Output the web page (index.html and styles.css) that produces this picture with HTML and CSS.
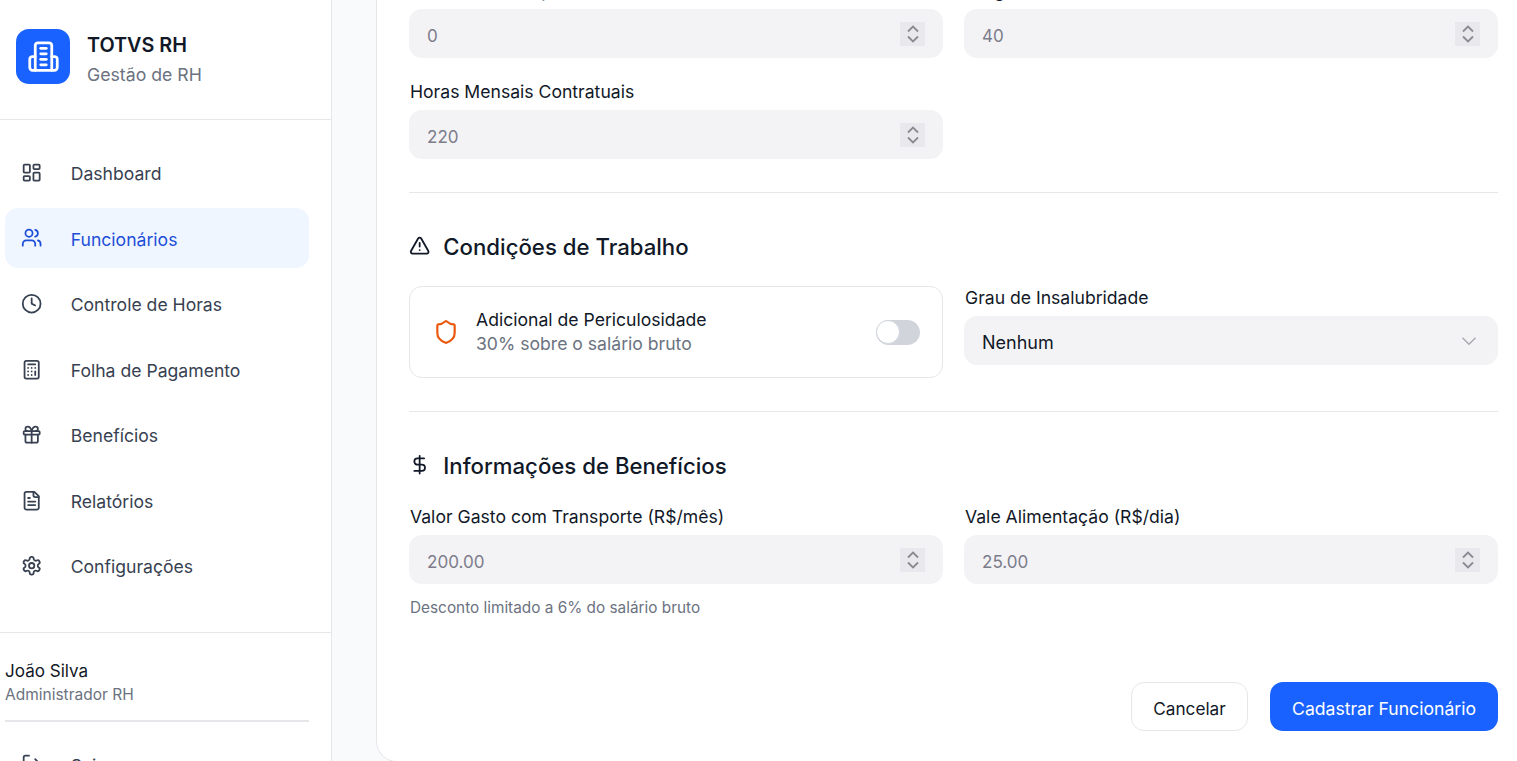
FILE: index.html
```html
<!DOCTYPE html>
<html lang="pt-BR">
<head>
<meta charset="utf-8">
<title>TOTVS RH</title>
<link rel="stylesheet" href="styles.css">
</head>
<body>
<div class="app">
  <aside class="sidebar">
    <header class="brand">
      <div class="logo">
        <svg viewBox="0 0 24 24" class="logo-ico"><path d="M6 22V4a2 2 0 0 1 2-2h8a2 2 0 0 1 2 2v18Z"/><path d="M6 12H4a2 2 0 0 0-2 2v6a2 2 0 0 0 2 2h2"/><path d="M18 12h2a2 2 0 0 1 2 2v6a2 2 0 0 1-2 2h-2"/><path d="M10 6h4"/><path d="M10 10h4"/><path d="M10 14h4"/><path d="M10 18h4"/></svg>
      </div>
      <div class="brand-text">
        <div class="brand-title">TOTVS RH</div>
        <div class="brand-sub">Gestão de RH</div>
      </div>
    </header>
    <nav class="nav">
      <a class="nav-item"><svg viewBox="0 0 24 24" class="ico"><rect width="7" height="9" x="3" y="3" rx="1"/><rect width="7" height="5" x="14" y="3" rx="1"/><rect width="7" height="9" x="14" y="12" rx="1"/><rect width="7" height="5" x="3" y="16" rx="1"/></svg><span>Dashboard</span></a>
      <a class="nav-item active"><svg viewBox="0 0 24 24" class="ico"><path d="M16 21v-2a4 4 0 0 0-4-4H6a4 4 0 0 0-4 4v2"/><circle cx="9" cy="7" r="4"/><path d="M22 21v-2a4 4 0 0 0-3-3.87"/><path d="M16 3.13a4 4 0 0 1 0 7.75"/></svg><span>Funcionários</span></a>
      <a class="nav-item"><svg viewBox="0 0 24 24" class="ico"><circle cx="12" cy="12" r="10"/><polyline points="12 6 12 12 16 14"/></svg><span>Controle de Horas</span></a>
      <a class="nav-item"><svg viewBox="0 0 24 24" class="ico"><rect width="16" height="20" x="4" y="2" rx="2"/><line x1="8" x2="16" y1="6" y2="6"/><line x1="16" x2="16" y1="14" y2="18"/><path d="M16 10h.01"/><path d="M12 10h.01"/><path d="M8 10h.01"/><path d="M12 14h.01"/><path d="M8 14h.01"/><path d="M12 18h.01"/><path d="M8 18h.01"/></svg><span>Folha de Pagamento</span></a>
      <a class="nav-item"><svg viewBox="0 0 24 24" class="ico"><rect x="3" y="8" width="18" height="4" rx="1"/><path d="M12 8v13"/><path d="M19 12v7a2 2 0 0 1-2 2H7a2 2 0 0 1-2-2v-7"/><path d="M7.5 8a2.5 2.5 0 0 1 0-5A4.8 8 0 0 1 12 8a4.8 8 0 0 1 4.5-5 2.5 2.5 0 0 1 0 5"/></svg><span>Benefícios</span></a>
      <a class="nav-item"><svg viewBox="0 0 24 24" class="ico"><path d="M15 2H6a2 2 0 0 0-2 2v16a2 2 0 0 0 2 2h12a2 2 0 0 0 2-2V7Z"/><path d="M14 2v4a2 2 0 0 0 2 2h4"/><path d="M10 9H8"/><path d="M16 13H8"/><path d="M16 17H8"/></svg><span>Relatórios</span></a>
      <a class="nav-item"><svg viewBox="0 0 24 24" class="ico"><path d="M12.22 2h-.44a2 2 0 0 0-2 2v.18a2 2 0 0 1-1 1.73l-.43.25a2 2 0 0 1-2 0l-.15-.08a2 2 0 0 0-2.73.73l-.22.38a2 2 0 0 0 .73 2.73l.15.1a2 2 0 0 1 1 1.72v.51a2 2 0 0 1-1 1.74l-.15.09a2 2 0 0 0-.73 2.73l.22.38a2 2 0 0 0 2.73.73l.15-.08a2 2 0 0 1 2 0l.43.25a2 2 0 0 1 1 1.73V20a2 2 0 0 0 2 2h.44a2 2 0 0 0 2-2v-.18a2 2 0 0 1 1-1.73l.43-.25a2 2 0 0 1 2 0l.15.08a2 2 0 0 0 2.73-.73l.22-.39a2 2 0 0 0-.73-2.73l-.15-.08a2 2 0 0 1-1-1.74v-.5a2 2 0 0 1 1-1.74l.15-.09a2 2 0 0 0 .73-2.73l-.22-.38a2 2 0 0 0-2.73-.73l-.15.08a2 2 0 0 1-2 0l-.43-.25a2 2 0 0 1-1-1.73V4a2 2 0 0 0-2-2z"/><circle cx="12" cy="12" r="3"/></svg><span>Configurações</span></a>
    </nav>
    <footer class="user">
      <div class="user-name">João Silva</div>
      <div class="user-role">Administrador RH</div>
      <div class="user-line"></div>
      <a class="nav-item logout"><svg viewBox="0 0 24 24" class="ico"><path d="M9 21H5a2 2 0 0 1-2-2V5a2 2 0 0 1 2-2h4"/><polyline points="16 17 21 12 16 7"/><line x1="21" x2="9" y1="12" y2="12"/></svg><span>Sair</span></a>
    </footer>
  </aside>

  <main class="main">
    <section class="card">
      <div class="scrolled">
        <div class="grid">
          <div class="field">
            <label class="label">Horas Extras Esperadas</label>
            <div class="input"><span class="value">0</span><span class="spin"><svg viewBox="0 0 14 22"><path d="M2 8.500 7 3.500l5 5"/><path d="M2 13.500l5 5 5-5"/></svg></span></div>
          </div>
          <div class="field">
            <label class="label">Carga Horária Semanal</label>
            <div class="input"><span class="value">40</span><span class="spin"><svg viewBox="0 0 14 22"><path d="M2 8.500 7 3.500l5 5"/><path d="M2 13.500l5 5 5-5"/></svg></span></div>
          </div>
          <div class="field">
            <label class="label">Horas Mensais Contratuais</label>
            <div class="input"><span class="value">220</span><span class="spin"><svg viewBox="0 0 14 22"><path d="M2 8.500 7 3.500l5 5"/><path d="M2 13.500l5 5 5-5"/></svg></span></div>
          </div>
        </div>

        <hr class="rule">
        <h2 class="heading"><svg viewBox="0 0 24 24" class="ico dark"><path d="m21.73 18-8-14a2 2 0 0 0-3.48 0l-8 14A2 2 0 0 0 4 21h16a2 2 0 0 0 1.730-3"/><path d="M12 9v4"/><path d="M12 17h.01"/></svg><span>Condições de Trabalho</span></h2>
        <div class="grid">
          <div class="panel">
            <svg viewBox="0 0 24 24" class="ico shield"><path d="M20 13c0 5-3.500 7.500-7.660 8.950a1 1 0 0 1-.67-.01C7.500 20.500 4 18 4 13V6a1 1 0 0 1 1-1c2 0 4.500-1.200 6.240-2.720a1.170 1.170 0 0 1 1.520 0C14.510 3.810 17 5 19 5a1 1 0 0 1 1 1z"/></svg>
            <div class="panel-text">
              <div class="panel-title">Adicional de Periculosidade</div>
              <div class="panel-sub">30% sobre o salário bruto</div>
            </div>
            <div class="toggle"><span class="knob"></span></div>
          </div>
          <div class="field">
            <label class="label">Grau de Insalubridade</label>
            <div class="input select"><span class="value">Nenhum</span><svg viewBox="0 0 24 24" class="chev"><path d="m6 9 6 6 6-6"/></svg></div>
          </div>
        </div>

        <hr class="rule">
        <h2 class="heading"><svg viewBox="0 0 24 24" class="ico dark"><line x1="12" x2="12" y1="2" y2="22"/><path d="M17 5H9.500a3.500 3.500 0 0 0 0 7h5a3.500 3.500 0 0 1 0 7H6"/></svg><span>Informações de Benefícios</span></h2>
        <div class="grid">
          <div class="field">
            <label class="label">Valor Gasto com Transporte (R$/mês)</label>
            <div class="input"><span class="value">200.00</span><span class="spin"><svg viewBox="0 0 14 22"><path d="M2 8.500 7 3.500l5 5"/><path d="M2 13.500l5 5 5-5"/></svg></span></div>
            <p class="hint">Desconto limitado a 6% do salário bruto</p>
          </div>
          <div class="field">
            <label class="label">Vale Alimentação (R$/dia)</label>
            <div class="input"><span class="value">25.00</span><span class="spin"><svg viewBox="0 0 14 22"><path d="M2 8.500 7 3.500l5 5"/><path d="M2 13.500l5 5 5-5"/></svg></span></div>
          </div>
        </div>

        <div class="actions">
          <button class="btn ghost">Cancelar</button>
          <button class="btn primary">Cadastrar Funcionário</button>
        </div>
      </div>
    </section>
  </main>
</div>
</body>
</html>
```
FILE: styles.css
```css
* { box-sizing: border-box; }
html, body { margin: 0; height: 100%; overflow: hidden; }
body {
  font-family: Inter, "Noto Sans", "Liberation Sans", sans-serif;
  font-size: 17.6px;
  color: #111827;
  background: #fff;
}
.app { display: flex; height: 761px; overflow: hidden; }

/* Sidebar */
.sidebar {
  width: 332px;
  flex: none;
  height: 761px;
  overflow: hidden;
  background: #fff;
  border-right: 1px solid #e5e7eb;
  display: flex;
  flex-direction: column;
}
.brand {
  height: 120px;
  flex: none;
  border-bottom: 1px solid #e5e7eb;
  display: flex;
  align-items: center;
  gap: 17px;
  padding: 0 0 1px 16px;
}
.logo {
  width: 54px;
  height: 55px;
  margin-top: -6px;
  border-radius: 13px;
  background: #1a62ff;
  display: flex;
  align-items: center;
  justify-content: center;
}
.logo-ico {
  width: 33px;
  height: 33px;
  fill: none;
  stroke: #fff;
  stroke-width: 2;
  stroke-linecap: round;
  stroke-linejoin: round;
}
.brand-title { font-size: 19.8px; font-weight: 600; line-height: 29px; color: #111827; }
.brand-sub { font-size: 17.7px; line-height: 26px; color: #6b7280; margin-top: 2px; }

.nav {
  height: 512px;
  flex: none;
  padding: 22.6px 22px 0 5px;
  display: flex;
  flex-direction: column;
  gap: 5.55px;
}
.nav-item {
  height: 60px;
  flex: none;
  display: flex;
  align-items: center;
  gap: 28.4px;
  padding-left: 16px;
  border-radius: 13px;
  color: #374151;
  font-size: 17.6px;
}
.nav-item span { margin-top: 2px; }
.nav-item.active { background: #eff6ff; color: #1d4ed8; }
.ico {
  width: 21.33px;
  height: 21.33px;
  flex: none;
  fill: none;
  stroke: currentColor;
  stroke-width: 2;
  stroke-linecap: round;
  stroke-linejoin: round;
}
.user {
  flex: none;
  border-top: 1px solid #e5e7eb;
  padding: 25px 22px 0 5px;
}
.user-name { font-size: 17.07px; line-height: 26px; color: #111827; }
.user-role { font-size: 15.5px; line-height: 22px; color: #6b7280; }
.user-line { height: 2px; background: #e5e7eb; margin-top: 14px; }
.logout { margin-top: 12px; }

/* Main */
.main {
  flex: 1;
  min-width: 0;
  height: 761px;
  overflow: hidden;
  background: #f9fafb;
  padding-left: 44px;
}
.card {
  height: 762px;
  overflow: hidden;
  background: #fff;
  border: 1px solid #e5e7eb;
  border-top: 0;
  border-right: 0;
  border-radius: 0 0 0 21px;
  padding: 0 19px 0 32px;
}
.scrolled { margin-top: -23px; }
.grid {
  display: grid;
  grid-template-columns: 534px 534px;
  column-gap: 21px;
  row-gap: 20px;
  align-items: start;
}
.label {
  display: block;
  font-size: 17.6px;
  line-height: 24px;
  padding: 2px 0 0 1px;
  margin-bottom: 6px;
  color: #111827;
}
.input {
  height: 49px;
  border-radius: 13px;
  background: #f3f3f6;
  color: #7c7c8a;
  font-size: 17.07px;
  display: flex;
  align-items: center;
  justify-content: space-between;
  padding: 0 18px;
}
.value { padding-top: 3px; }
.spin {
  width: 25px;
  height: 24px;
  margin-top: 1px;
  background: #e8e8ed;
  display: flex;
  align-items: center;
  justify-content: center;
}
.spin svg {
  width: 14px;
  height: 22px;
  fill: none;
  stroke: #8a8a93;
  stroke-width: 1.8;
}
.select { color: #111827; font-size: 18px; padding-right: 16px; }
.chev {
  width: 26px;
  height: 26px;
  fill: none;
  stroke: #a8a8b0;
  stroke-width: 1.3;
}
.hint { margin: 13px 0 0; padding-left: 1px; font-size: 15.35px; line-height: 22px; color: #6b7280; }
.rule { border: 0; border-top: 1px solid #e5e7eb; margin: 33px 0 37px; }
.heading {
  display: flex;
  align-items: center;
  gap: 13px;
  margin: 0 0 22px;
  font-size: 22.2px;
  font-weight: 450;
  line-height: 30px;
  height: 32px;
  color: #111827;
}
.heading span { margin-top: 1px; }
.dark { color: #111827; }

.panel {
  height: 92px;
  margin-top: 2px;
  border: 1px solid #e5e7eb;
  border-radius: 13px;
  display: flex;
  align-items: center;
  padding: 0 22px 0 22.5px;
  gap: 17.5px;
}
.shield { width: 26px; height: 26px; color: #ea580c; }
.panel-text { flex: 1; }
.panel-title { font-size: 17.6px; line-height: 24px; color: #111827; }
.panel-sub { font-size: 17.6px; line-height: 24px; color: #6b7280; }
.toggle {
  width: 44px;
  height: 25px;
  border-radius: 13px;
  background: #d1d5db;
  display: flex;
  align-items: center;
}
.knob {
  width: 24px;
  height: 24px;
  border-radius: 50%;
  background: #fff;
  border: 1px solid #d1d5db;
}

.actions {
  display: flex;
  justify-content: flex-end;
  gap: 22px;
  margin-top: 63px;
}
.btn {
  height: 49px;
  border-radius: 13px;
  font-family: inherit;
  padding: 3px 0 0;
}
.ghost { width: 117px; background: #fff; border: 1px solid #e5e7eb; color: #111827; font-size: 17.2px; }
.primary { width: 228px; background: #1a62ff; border: 0; color: #fff; font-size: 17.6px; }
```
